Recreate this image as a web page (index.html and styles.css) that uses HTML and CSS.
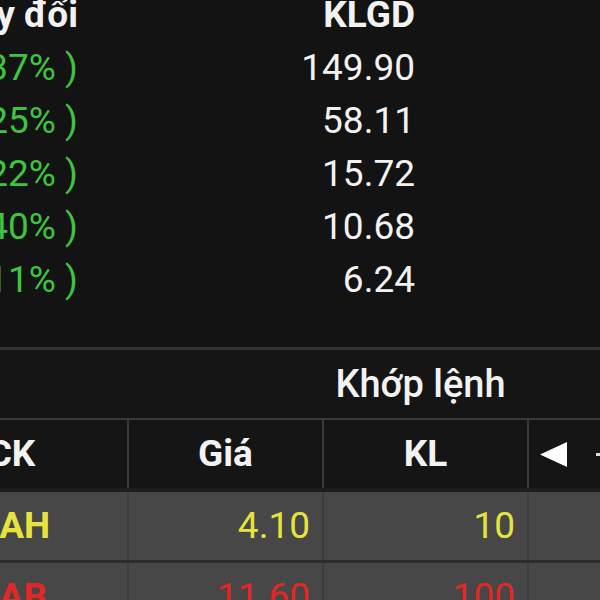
FILE: index.html
```html
<!DOCTYPE html>
<html lang="vi">
<head>
  <meta charset="UTF-8">
  <meta name="viewport" content="width=device-width, initial-scale=1.0">
  <title>Bảng giá</title>
  <link rel="stylesheet" href="styles.css">
</head>
<body>
  <section class="summary">
    <div class="sum-row sum-head"><span>Thay đổi</span><span>KLGD</span></div>
    <div class="sum-row"><span class="up">+0.05 ( 1.37% )</span><span>149.90</span></div>
    <div class="sum-row"><span class="up">+0.30 ( 2.25% )</span><span>58.11</span></div>
    <div class="sum-row"><span class="up">+0.10 ( 1.22% )</span><span>15.72</span></div>
    <div class="sum-row"><span class="up">+0.20 ( 3.40% )</span><span>10.68</span></div>
    <div class="sum-row"><span class="up">+0.05 ( 0.11% )</span><span>6.24</span></div>
  </section>

  <section class="match">
    <div class="match-title"><span>Khớp lệnh</span></div>

    <div class="trade-row trade-head">
      <div class="cell">CK</div>
      <div class="cell">Giá</div>
      <div class="cell">KL</div>
      <div class="cell arrows">
        <svg width="27" height="25" viewBox="0 0 27 25"><polygon points="0,12.5 27,0 27,25" fill="#fff"/></svg>
        <span class="dash"></span>
      </div>
    </div>

    <div class="trade-row ref">
      <div class="cell code">HAH</div>
      <div class="cell num">4.10</div>
      <div class="cell num">10</div>
      <div class="cell"></div>
    </div>
    <div class="trade-row down">
      <div class="cell code">SAB</div>
      <div class="cell num">11.60</div>
      <div class="cell num">100</div>
      <div class="cell"></div>
    </div>
  </section>
</body>
</html>
```

FILE: styles.css
```css
html, body {
  margin: 0;
  height: 100%;
  background-color: #131313;
  overflow: hidden;
}
body {
  font-family: Roboto, "Noto Sans", sans-serif;
  font-size: 37px;
  color: #f2f2f2;
}

/* Market summary */
.summary {
  margin-top: -12px;
  margin-left: -200px;
  padding-bottom: 41px;
  border-bottom: 3px solid #333;
}
.sum-row {
  display: grid;
  grid-template-columns: 278px 337px;
  height: 53px;
  line-height: 53px;
  text-align: right;
  white-space: nowrap;
}
.sum-head {
  font-weight: bold;
}
.up {
  color: #3ec43e;
}

/* Matched orders */
.match-title {
  display: grid;
  grid-template-columns: 318px 205px;
  height: 68px;
  line-height: 68px;
  background-color: #151515;
  font-size: 38px;
  font-weight: 500;
}
.match-title span {
  grid-column: 2;
  text-align: center;
}
.trade-row {
  display: grid;
  grid-template-columns: 231px 193px 203px 1fr;
  column-gap: 2px;
  width: 704px;
  margin-left: -104px;
  height: 68px;
  line-height: 68px;
  white-space: nowrap;
}
.trade-head {
  background-color: #393939;
  border-top: 2px solid #393939;
  border-bottom: 4px solid #1d1d1d;
  font-weight: bold;
}
.trade-head .cell {
  background-color: #151515;
  text-align: center;
}
.cell {
  overflow: hidden;
}
.arrows {
  display: flex;
  align-items: center;
  gap: 29px;
  padding-left: 11px;
}
.arrows svg {
  display: block;
  flex: none;
}
.dash {
  flex: none;
  width: 8px;
  height: 3px;
  background-color: #ddd;
}
.ref, .down {
  background-color: #3b3b3b;
  border-bottom: 3px solid #2c2c2c;
}
.ref .cell, .down .cell {
  background-color: #474747;
}
.code {
  text-align: center;
  font-weight: bold;
}
.num {
  text-align: right;
  padding-right: 12px;
}
.ref {
  color: #e4e43c;
}
.down {
  color: #e32626;
}
```
